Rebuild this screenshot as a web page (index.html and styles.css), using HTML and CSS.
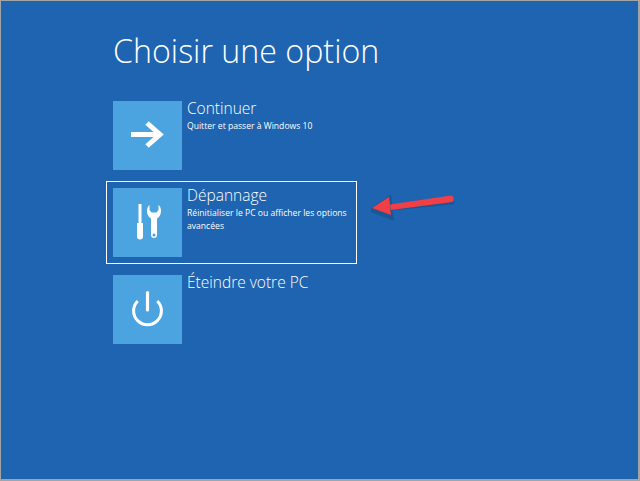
FILE: index.html
```html
<!DOCTYPE html>
<html lang="fr">
<head>
    <meta charset="UTF-8">
    <title>Choisir une option</title>
    <link rel="stylesheet" href="styles.css">
</head>

<body>
    <div class="screen">
        <h1 class="title">Choisir une option</h1>

        <div class="options">
            <div class="option">
                <div class="tile">
                    <svg width="69" height="69" viewBox="0 0 69 69">
                        <path d="M18 33.500H47M34 22L47 33.500L34 45" fill="none" stroke="#fff" stroke-width="5"/>
                    </svg>
                </div>
                <div class="text">
                    <div class="name">Continuer</div>
                    <div class="desc">Quitter et passer à Windows 10</div>
                </div>
            </div>

            <div class="option selected">
                <div class="tile">
                    <svg width="69" height="69" viewBox="0 0 69 69">
                        <path d="M25.500 16h3v19h1.500v13.500a3 3 0 0 1-6 0V35h1.500z" fill="#fff"/>
                        <path d="M36.500 17C34.500 18.500 34 21 34 23C34 26.500 35.500 29 38 30.500V47a3 3 0 0 0 6 0V30.500C46.500 29 48 26.500 48 23C48 21 47.500 18.500 45.500 17V22L43.500 24.500H38.500L36.500 22z" fill="#fff"/>
                        <circle cx="41" cy="47" r="1.500" fill="#4ba3df"/>
                    </svg>
                </div>
                <div class="text">
                    <div class="name">Dépannage</div>
                    <div class="desc">Réinitialiser le PC ou afficher les options avancées</div>
                </div>
            </div>

            <div class="option">
                <div class="tile">
                    <svg width="69" height="69" viewBox="0 0 69 69">
                        <path d="M24.700 26A13.900 13.900 0 1 0 44.300 26" fill="none" stroke="#fff" stroke-width="3"/>
                        <path d="M34.500 17.500V35" fill="none" stroke="#fff" stroke-width="3.200" stroke-linecap="round"/>
                    </svg>
                </div>
                <div class="text">
                    <div class="name">Éteindre votre PC</div>
                </div>
            </div>
        </div>

        <!-- Red annotation arrow on top of the screenshot -->
        <svg class="arrow" width="90" height="32" viewBox="0 0 90 32">
            <path d="M1 21L18 10L20 28zM20 19L81 13" fill="none" stroke="#17375e" stroke-opacity="0.3" stroke-width="5" stroke-linecap="round"/>
            <path d="M19 15.500L80 6.500A3.500 3.500 0 0 1 81 13L20 21z" fill="#f23f45"/>
            <path d="M1 19L18 8L20 26z" fill="#f23f45"/>
        </svg>
    </div>
</body>
</html>
```

FILE: styles.css
```css
html, body {
    margin: 0;
    padding: 0;
}

body {
    width: 640px;
    height: 481px;
    overflow: hidden;
    background-color: #a4a4a4;
    font-family: "Open Sans", "Liberation Sans", sans-serif;
    color: #fff;
}

.screen {
    position: relative;
    box-sizing: border-box;
    width: 637px;
    height: 478px;
    margin: 1px 0 0 1px;
    padding: 0 0 0 112px;
    background-color: #1e64b0;
}

.title {
    margin: 0;
    padding-top: 27px;
    height: 94px;
    box-sizing: border-box;
    font-size: 32.2px;
    line-height: 46px;
    font-weight: 300;
    white-space: nowrap;
}

.options {
    display: flex;
    flex-direction: column;
    gap: 4px;
    margin-left: -7px;
    margin-top: -1px;
}

.option {
    box-sizing: border-box;
    width: 251px;
    height: 83px;
    padding: 6px 6px;
    border: 1px solid transparent;
    display: flex;
    gap: 5px;
}

.selected {
    border-color: #fff;
}

.tile {
    flex: none;
    width: 69px;
    height: 69px;
    background-color: #4ba3df;
}

.tile svg {
    display: block;
}

.text {
    margin-top: -4px;
}

.name {
    font-size: 15.5px;
    line-height: 22px;
    font-weight: 300;
    white-space: nowrap;
}

.desc {
    width: 165px;
    font-size: 8.6px;
    line-height: 13px;
    margin-top: 1px;
}

.arrow {
    position: absolute;
    left: 370px;
    top: 188px;
}
```
